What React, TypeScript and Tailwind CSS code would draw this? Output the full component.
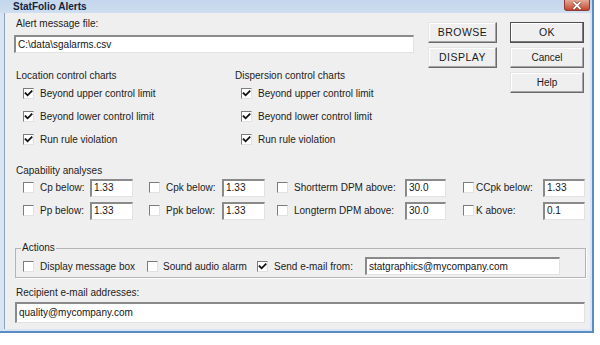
import React from "react";

function Check({ checked = false }: { checked?: boolean }) {
  return (
    <span className="w-[11px] h-[11px] shrink-0 bg-white border-t border-l border-r border-b border-t-[#7c7c7c] border-l-[#7c7c7c] border-r-[#e2e2e2] border-b-[#e2e2e2] flex items-center justify-center">
      {checked && (
        <svg width="9" height="9" viewBox="0 0 9 9">
          <path d="M1.5 4.2 L3.6 6.3 L7.6 2.2" stroke="#111" strokeWidth="1.8" fill="none" strokeLinecap="square" />
        </svg>
      )}
    </span>
  );
}

function Field({ value, className }: { value: string; className: string }) {
  return (
    <div
      className={
        "bg-white border-t-2 border-l-2 border-r border-b border-t-[#8a8a8a] border-l-[#8a8a8a] border-r-[#e2e2e2] border-b-[#e2e2e2] pl-[2px] flex items-center text-[10px] leading-[12px] text-[#151515] whitespace-nowrap overflow-hidden " +
        className
      }
    >
      {value}
    </div>
  );
}

function Btn({ label, def = false, caps = false }: { label: string; def?: boolean; caps?: boolean }) {
  return (
    <div
      className={
        "h-[21px] flex items-center justify-center bg-[#efefef] text-[#1a1a1a] " +
        (caps ? "text-[10.5px] tracking-[0.5px] " : "text-[10px] ") +
        (def
          ? "border border-[#505050] shadow-[inset_-1px_-1px_0_#7a7a7a,inset_1px_1px_0_#ffffff]"
          : "border border-t-[#e4e4e4] border-l-[#e4e4e4] border-r-[#6a6a6a] border-b-[#6a6a6a] shadow-[inset_-1px_-1px_0_#a4a4a4,inset_1px_1px_0_#ffffff]")
      }
    >
      {label}
    </div>
  );
}

function CheckRow({ label, pl }: { label: string; pl: string }) {
  return (
    <div className={"h-[23px] flex items-center gap-[6px] " + pl}>
      <Check checked />
      <span className="leading-[12px]">{label}</span>
    </div>
  );
}

export default function App() {
  return (
    <div className="w-[600px] h-[345px] bg-white overflow-hidden font-['Liberation_Sans',Arial,sans-serif] text-[10px] text-[#1c1c1c]">
      <div className="w-[594px] h-[333px] flex flex-col bg-[#d9e5f2] border-r-2 border-b-2 border-[#5a8dc4]">
        {/* title bar */}
        <div className="h-[13px] shrink-0 flex bg-gradient-to-b from-[#c3d6ec] to-[#cfdef0] pl-[13px]">
          <span className="font-bold text-[10px] leading-[13px] text-[#14243c]">StatFolio Alerts</span>
          <div className="ml-auto mr-[2px] w-[26px] h-[11px] rounded-b-[3px] bg-gradient-to-b from-[#e6a896] to-[#c4452c] border border-t-0 border-[#8c3c30] flex items-center justify-center">
            <svg width="12" height="9" viewBox="0 0 12 9">
              <path d="M2.5 1 L9.5 8 M9.5 1 L2.5 8" stroke="#6a2a20" strokeWidth="3" fill="none" />
              <path d="M2.5 1 L9.5 8 M9.5 1 L2.5 8" stroke="#ffffff" strokeWidth="1.8" fill="none" />
            </svg>
          </div>
        </div>
        {/* body */}
        <div className="flex-1 flex ml-[4px] mr-[2px] mb-[2px] min-h-0">
          <div className="flex-1 bg-[#efefef] border-l border-[#8ea3bc] pl-[9px] flex flex-col">
            {/* top: file + charts + buttons */}
            <div className="flex">
              <div className="w-[400px] flex flex-col">
                <div className="mt-[5px] h-[12px] leading-[12px] pl-[2px]">Alert message file:</div>
                <Field value="C:\data\sgalarms.csv" className="mt-[5px] h-[18px] w-[400px]" />
                <div className="mt-[17px] grid grid-cols-[219px_1fr]">
                  <div className="flex flex-col">
                    <div className="h-[12px] leading-[12px] pl-[2px]">Location control charts</div>
                    <CheckRow label="Beyond upper control limit" pl="pl-[9px]" />
                    <CheckRow label="Beyond lower control limit" pl="pl-[9px]" />
                    <CheckRow label="Run rule violation" pl="pl-[9px]" />
                  </div>
                  <div className="flex flex-col">
                    <div className="h-[12px] leading-[12px] pl-[2px]">Dispersion control charts</div>
                    <CheckRow label="Beyond upper control limit" pl="pl-[8px]" />
                    <CheckRow label="Beyond lower control limit" pl="pl-[8px]" />
                    <CheckRow label="Run rule violation" pl="pl-[8px]" />
                  </div>
                </div>
              </div>
              <div className="ml-[14px] w-[69px] mt-[9px] flex flex-col gap-[4px]">
                <Btn label="BROWSE" caps />
                <Btn label="DISPLAY" caps />
              </div>
              <div className="ml-[13px] w-[74px] mt-[9px] flex flex-col gap-[4px]">
                <Btn label="OK" def caps />
                <Btn label="Cancel" />
                <Btn label="Help" />
              </div>
            </div>

            {/* capability */}
            <div className="mt-[14px] h-[11px] leading-[11px] pl-[2px]">Capability analyses</div>
            <div className="h-[23px] flex items-center">
              <span className="ml-[9px]"><Check /></span>
              <span className="ml-[6px] w-[50px]">Cp below:</span>
              <Field value="1.33" className="w-[43px] h-[18px]" />
              <span className="ml-[16px]"><Check /></span>
              <span className="ml-[6px] w-[56px]">Cpk below:</span>
              <Field value="1.33" className="w-[43px] h-[18px]" />
              <span className="ml-[12px]"><Check /></span>
              <span className="ml-[6px] w-[111px]">Shortterm DPM above:</span>
              <Field value="30.0" className="w-[41px] h-[18px]" />
              <span className="ml-[17px]"><Check /></span>
              <span className="ml-[2px] w-[67px]">CCpk below:</span>
              <Field value="1.33" className="w-[42px] h-[18px]" />
            </div>
            <div className="h-[23px] flex items-center">
              <span className="ml-[9px]"><Check /></span>
              <span className="ml-[6px] w-[50px]">Pp below:</span>
              <Field value="1.33" className="w-[43px] h-[18px]" />
              <span className="ml-[16px]"><Check /></span>
              <span className="ml-[6px] w-[56px]">Ppk below:</span>
              <Field value="1.33" className="w-[43px] h-[18px]" />
              <span className="ml-[12px]"><Check /></span>
              <span className="ml-[6px] w-[111px]">Longterm DPM above:</span>
              <Field value="30.0" className="w-[41px] h-[18px]" />
              <span className="ml-[17px]"><Check /></span>
              <span className="ml-[2px] w-[67px]">K above:</span>
              <Field value="0.1" className="w-[42px] h-[18px]" />
            </div>

            {/* actions */}
            <fieldset className="mt-[20px] ml-[1px] w-[571px] border border-[#b4b4b4] shadow-[1px_1px_0_#ffffff] pt-[3px] pb-[2px]">
              <legend className="ml-[5px] px-[1px] text-[10px] leading-[12px]">Actions</legend>
              <div className="h-[18px] flex items-center">
                <span className="ml-[7px]"><Check /></span>
                <span className="ml-[6px] w-[107px]">Display message box</span>
                <Check />
                <span className="ml-[5px] w-[94px]">Sound audio alarm</span>
                <Check checked />
                <span className="ml-[6px] w-[91px]">Send e-mail from:</span>
                <Field value="statgraphics@mycompany.com" className="w-[195px] h-[18px]" />
              </div>
            </fieldset>

            <div className="mt-[9px] h-[12px] leading-[12px] pl-[2px]">Recipient e-mail addresses:</div>
            <Field value="quality@mycompany.com" className="mt-[3px] ml-[1px] w-[570px] h-[21px]" />
          </div>
        </div>
      </div>
    </div>
  );
}
